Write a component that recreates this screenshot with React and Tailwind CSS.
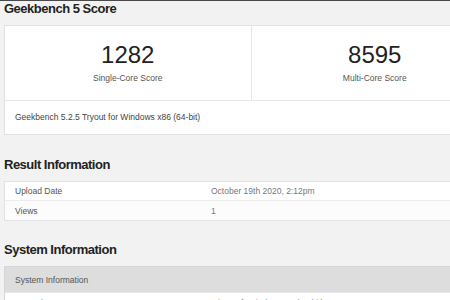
import React from "react";

const scores = [
  { value: "1282", label: "Single-Core Score" },
  { value: "8595", label: "Multi-Core Score" },
];

const resultRows = [
  { name: "Upload Date", value: "October 19th 2020, 2:12pm" },
  { name: "Views", value: "1" },
];

const Heading = ({ children, className = "" }) => (
  <h2 className={`text-[13px] leading-4 font-bold tracking-[-0.5px] text-[#222] ${className}`}>{children}</h2>
);

const App = () => {
  return (
    <div
      className="w-[450px] h-[300px] overflow-hidden bg-[#f2f2f2] text-[#444]"
      style={{ fontFamily: '"Liberation Sans", Arial, sans-serif' }}
    >
      {/* top edge of browser chrome */}
      <div className="h-px bg-[#4a4a4a]" />

      <div className="w-[499px] pl-1">
        <Heading>Geekbench 5 Score</Heading>

        {/* Score card */}
        <div className="mt-2 bg-white border border-[#e2e2e2]">
          <div className="grid grid-cols-2 border-b border-[#e6e6e6]">
            {scores.map((s, i) => (
              <div
                key={s.label}
                className={`h-[74px] pt-[17px] flex flex-col items-center ${i === 0 ? "border-r border-[#e6e6e6]" : ""}`}
              >
                <div className="text-[24px] leading-6 text-[#222]">{s.value}</div>
                <div className="mt-[5px] text-[8.5px] leading-3 text-[#555]">{s.label}</div>
              </div>
            ))}
          </div>
          <div className="h-[33px] pt-[10px] pl-[10px] text-[8.5px] leading-3 text-[#444]">
            Geekbench 5.2.5 Tryout for Windows x86 (64-bit)
          </div>
        </div>

        <Heading className="mt-[22px]">Result Information</Heading>
        <div className="mt-2 bg-white border border-[#e2e2e2]">
          {resultRows.map((r, i) => (
            <div
              key={r.name}
              className={`h-[19px] flex items-center text-[8.5px] leading-3 ${i === 0 ? "border-b border-[#ececec]" : "bg-[#fcfcfc]"}`}
            >
              <div className="w-[206px] pl-[10px] text-[#555]">{r.name}</div>
              <div className="text-[#777]">{r.value}</div>
            </div>
          ))}
        </div>

        <Heading className="mt-[21px]">System Information</Heading>
        <div className="mt-2 bg-white border border-[#d6d6d6]">
          <div className="h-[25px] flex items-center pl-[10px] bg-[#dddddd] text-[8.5px] leading-3 text-[#555]">
            System Information
          </div>
          <div className="h-[20px] flex items-center text-[8.5px] leading-3 border-t border-[#e6e6e6]">
            <div className="w-[206px] pl-[10px] text-[#555]">Operating System</div>
            <div className="text-[#777]">Microsoft Windows 10 (64-bit)</div>
          </div>
        </div>
      </div>
    </div>
  );
};

export default App;
